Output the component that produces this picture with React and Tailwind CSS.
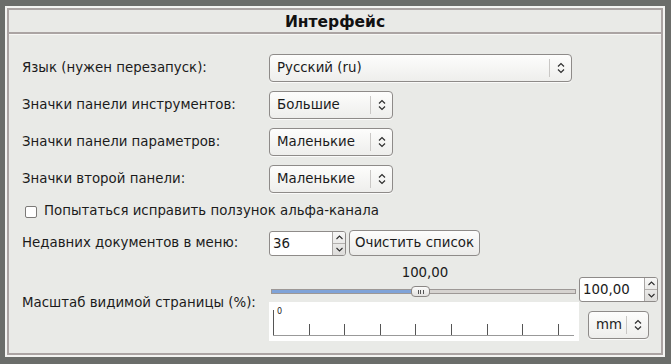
import React from 'react'

const font = { fontFamily: '"DejaVu Sans", "Noto Sans", sans-serif' }

const Chevrons = () => (
  <svg width="8" height="12" viewBox="0 0 8 12" fill="none" stroke="#2e2e2e" strokeWidth="1.2">
    <path d="M1 4.5 L4 1.5 L7 4.5" />
    <path d="M1 7.5 L4 10.5 L7 7.5" />
  </svg>
)

const Combo = ({ text, width }) => (
  <div className={`flex items-center h-[28px] ${width} rounded-[4px] border border-[#8e8b89] bg-gradient-to-b from-[#fdfdfc] to-[#eeeeec] shadow-[0_1px_0_#fafaf9]`}>
    <span className="flex-1 pl-[7px] text-[13.35px] text-[#1b1b1b]">{text}</span>
    <div className="h-[18px] w-px bg-[#c9c7c5]" />
    <div className="w-[21px] flex justify-center">
      <Chevrons />
    </div>
  </div>
)

const Spin = ({ value, width }) => (
  <div className={`flex h-[25px] ${width} rounded-[3px] border border-[#8e8b89] bg-white overflow-hidden`}>
    <span className="flex-1 pl-[3px] text-[13.35px] leading-[23px] text-[#1b1b1b]">{value}</span>
    <div className="w-[13px] flex flex-col border-l border-[#a9a6a4] bg-gradient-to-b from-[#f7f7f6] to-[#dddcda]">
      <div className="flex-1 flex items-center justify-center border-b border-[#b3b0ae]">
        <svg width="7" height="5" viewBox="0 0 7 5" fill="none" stroke="#2e2e2e" strokeWidth="1.1"><path d="M0.5 4 L3.5 1 L6.5 4" /></svg>
      </div>
      <div className="flex-1 flex items-center justify-center">
        <svg width="7" height="5" viewBox="0 0 7 5" fill="none" stroke="#2e2e2e" strokeWidth="1.1"><path d="M0.5 1 L3.5 4 L6.5 1" /></svg>
      </div>
    </div>
  </div>
)

const Row = ({ label, children }) => (
  <div className="flex items-center">
    <span className="w-[247px] text-[13.35px] text-[#1b1b1b]">{label}</span>
    {children}
  </div>
)

const ticks = [0, 1, 2, 3, 4, 5, 6, 7, 8]

export default function App() {
  return (
    <div className="w-[671px] h-[364px] bg-[#6b6d6a] pt-[6px] pl-[5px]" style={font}>
      <div className="w-[660px] h-[351px] border-2 border-[#f4f4f2]">
        <div className="w-full h-full border-2 border-[#aba4a3] bg-[#e9eae7] flex flex-col">
          <div className="h-[22px] pt-[3px] flex items-center justify-center text-[15.5px] font-bold text-[#111]">
            Интерфейс
          </div>
          <div className="h-[2px] bg-[#aba4a3]" />
          <div className="h-px bg-[#f7f7f5]" />

          <div className="flex flex-col pl-[13px] pt-[19px]">
            <div className="flex flex-col gap-[9px]">
              <Row label="Язык (нужен перезапуск):">
                <Combo text="Русский (ru)" width="w-[303px]" />
              </Row>
              <Row label="Значки панели инструментов:">
                <Combo text="Большие" width="w-[124px]" />
              </Row>
              <Row label="Значки панели параметров:">
                <Combo text="Маленькие" width="w-[124px]" />
              </Row>
              <Row label="Значки второй панели:">
                <Combo text="Маленькие" width="w-[124px]" />
              </Row>
            </div>

            <div className="flex items-center mt-[8px] h-[21px] pl-[3px]">
              <div className="w-[12px] h-[12px] border border-[#7c7a78] bg-white rounded-[2px]" />
              <span className="ml-[7px] text-[13.35px] text-[#1b1b1b]">Попытаться исправить ползунок альфа-канала</span>
            </div>

            <div className="mt-[8px]">
              <Row label="Недавних документов в меню:">
                <Spin value="36" width="w-[77px]" />
                <div className="ml-[3px] h-[26px] px-[5px] flex items-center rounded-[4px] border border-[#8e8b89] bg-gradient-to-b from-[#fdfdfc] to-[#ebebe9] text-[13.35px] text-[#1b1b1b]">
                  Очистить список
                </div>
              </Row>
            </div>

            <div className="flex items-center mt-[9px]">
              <span className="w-[247px] text-[13.35px] text-[#1b1b1b]">Масштаб видимой страницы (%):</span>
              <div className="flex flex-col">
                <div className="flex items-end">
                  <div className="w-[310px] flex flex-col">
                    <span className="self-center text-[13.35px] leading-[15px] text-[#1b1b1b] ml-[2px]">100,00</span>
                    <div className="relative w-[305px] h-[5px] mt-[9px] mb-[7px] ml-[2px] border border-[#9d9896] bg-[#d6d3d0]">
                      <div className="h-full w-[142px] bg-[#7fa3d8]" />
                      <div className="absolute left-[139px] top-[-4px] w-[19px] h-[11px] rounded-[4px] border border-[#8a8684] bg-gradient-to-b from-[#fbfbfa] to-[#e2e1df] flex items-center justify-center gap-[1.5px]">
                        <div className="w-px h-[4px] bg-[#555]" />
                        <div className="w-px h-[4px] bg-[#555]" />
                        <div className="w-px h-[4px] bg-[#555]" />
                      </div>
                    </div>
                  </div>
                  <div className="mb-[-1px]">
                    <Spin value="100,00" width="w-[79px]" />
                  </div>
                </div>
                <div className="flex items-start">
                  <div className="relative w-[310px] h-[39px] bg-white mt-[1px]">
                    <div className="absolute left-[4px] top-[8px] w-px h-[26px] bg-[#555]" />
                    <div className="absolute left-[4px] top-[33px] w-[301px] h-px bg-[#999]" />
                    <span className="absolute left-[8px] top-[5px] text-[8px] leading-[9px] text-[#222]">0</span>
                    {ticks.map((i) => (
                      <div key={i} className="absolute top-[22px] w-px h-[11px] bg-[#555]" style={{ left: 4 + Math.round(i * 35.6) }} />
                    ))}
                  </div>
                  <div className="ml-[9px] mt-[10px]">
                    <Combo text="mm" width="w-[61px]" />
                  </div>
                </div>
              </div>
            </div>
          </div>
        </div>
      </div>
    </div>
  )
}
